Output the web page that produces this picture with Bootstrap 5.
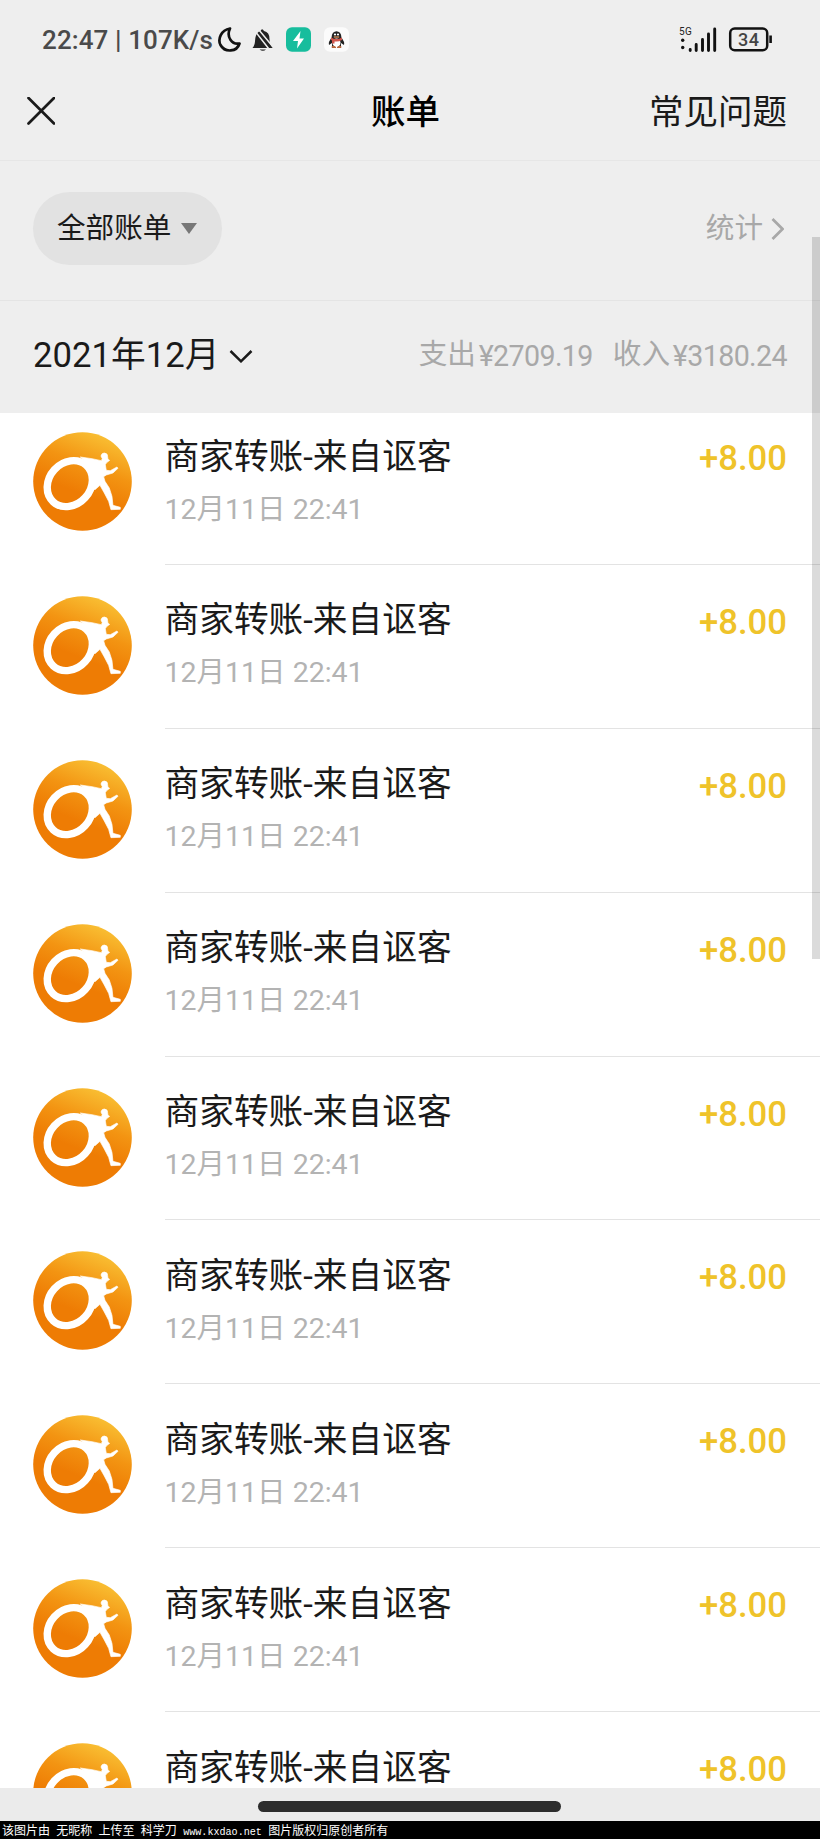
<!DOCTYPE html>
<html lang="zh-CN">
<head>
<meta charset="utf-8">
<meta name="viewport" content="width=device-width, initial-scale=1">
<title>账单</title>
<link href="https://cdn.jsdelivr.net/npm/bootstrap@5.3.0/dist/css/bootstrap.min.css" rel="stylesheet">
<style>
  body { font-family: Roboto, "Noto Sans CJK SC", sans-serif; background: #fff; color: #1a1a1a; }
  .screen { width: 820px; height: 1839px; line-height: 1; }
  .chrome { background: #eee; }
  .status { height: 80px; padding: 0 48px 0 42px; }
  .status-text { font-size: 26px; font-weight: 500; color: #4a4a4a; width: 175px; letter-spacing: .1px; }
  .titlebar { height: 81px; padding: 0 33px 18px 27px; border-bottom: 1px solid #e6e6e6; }
  .titlebar h1 { font-size: 34.5px; font-weight: 500; color: #000; line-height: 1; padding: 2px 9px 0 0; }
  .faq { font-size: 34.5px; padding-top: 3px; }
  .filter { height: 140px; padding: 31px 33px 0; border-bottom: 1px solid #e4e4e4; }
  .pill { height: 73px; width: 189px; background: #e2e2e2; font-size: 28.6px; padding: 0 25px 0 24px; }
  .stats { height: 73px; color: #a8a8a8; font-size: 28.6px; padding-right: 3px; }
  .month { height: 112px; padding: 0 33px 4px; }
  .month-name { font-size: 34.7px; }
  .sums { font-size: 28.6px; color: #a8a8a8; }
  .sum-label { width: 60px; }
  .sum-num { font-size: 28.6px; padding-top: 2px; letter-spacing: -.6px; }
  .bills { height: 1375px; }
  .bill { height: 163.9px; padding-left: 32.5px; }
  .bill:first-of-type { margin-top: -12px; }
  .bill-body { margin-left: 33px; padding: 38.5px 33px 0 0; border-bottom: 1px solid #e3e3e3; }
  .bill-name { font-size: 34.7px; height: 36px; white-space: nowrap; }
  .bill-time { font-size: 28.5px; color: #b3b3b3; margin-top: 20px; }
  .amount { font-size: 34.7px; font-weight: 500; color: #efc32a; padding-top: 1.5px; }
  .avatar { width: 99px; height: 99px; margin-top: 31px; flex: none; }
  .homebar { height: 33px; background: #ebebeb; padding: 13px 0 0 258px; }
  .homebar div { width: 303px; height: 11px; background: #2d2d2d; }
  .credit { height: 18px; background: #000; color: #fff; font: 12px/18px "Noto Sans CJK SC", sans-serif; padding-left: 2px; word-spacing: 3.6px; white-space: nowrap; }
  .credit span { font: 10.1px/12px "Liberation Mono", monospace; }
  .scrollthumb { position: absolute; right: 0; top: 237px; width: 8px; height: 722px; background: rgba(0,0,0,.14); }
</style>
</head>
<body>
<svg width="0" height="0" class="position-absolute" aria-hidden="true">
  <defs>
    <linearGradient id="orange" x1=".66" y1="0" x2=".42" y2=".6">
      <stop offset="0" stop-color="#f9c034"/><stop offset=".55" stop-color="#f39412"/><stop offset="1" stop-color="#ee7c04"/>
    </linearGradient>
    <symbol id="runner" viewBox="0 0 99 99">
      <circle cx="49.5" cy="49.5" r="49.3" fill="url(#orange)"/>
      <ellipse cx="36.8" cy="51.6" rx="24.6" ry="20.8" fill="none" stroke="#fff" stroke-width="7.4" transform="rotate(-48 36.8 51.6)"/>
      <path fill="#fff" stroke="#fff" stroke-width="2" stroke-linejoin="round" transform="translate(-2.7 -4) scale(.3333)" d="M150 87L185 92L213 98L216 92L212 84Q214 75 222 75Q233 76 232 86L233 94L238 97L228 105L225 110L228 127L240 128L260 117L263 121L248 135L228 141L220 146L224 160L237 180L245 205L248 232L270 238V244L242 245L235 220L222 195L209 172L194 185L182 180L192 150L185 120Z"/>
    </symbol>
  </defs>
</svg>
<main class="screen position-relative overflow-hidden d-flex flex-column">
  <div class="chrome status d-flex align-items-center flex-shrink-0">
    <div class="status-text text-nowrap">22:47 | 107K/s</div>
    <svg width="134" height="30" viewBox="0 0 134 30">
      <path d="M13 3.500C4 5 .5 14 3.500 20C8 28 20 27 22.500 18.500C15 20 9 12 13 3.500Z" fill="none" stroke="#111" stroke-width="2.700" stroke-linejoin="round"/>
      <path d="M35.500 23C39 19 37.500 14 39 10.500Q40.500 6.500 43.500 6Q45 2.500 47 6Q52.500 7 52.500 14Q52.500 20 56 23ZM42.500 24.500H49Q46 27 42.500 24.500Z" fill="#222"/>
      <path d="M37.500 5.500L53.500 26M42 5L56.500 22.500" stroke="#eee" stroke-width="1.500"/>
      <rect x="69" y="2.300" width="25" height="24.500" rx="6" fill="#17bd9d"/>
      <path d="M83.500 6L76 16H81L80 23.500L87 13.500H82.500Z" fill="#fff"/>
      <rect x="107" y="2.300" width="25" height="24.500" rx="6" fill="#fbfbfb"/>
      <ellipse cx="119.500" cy="11.500" rx="4.800" ry="5.300" fill="#222"/>
      <path d="M115 12Q111 17 112 20L115 18V21H124V18L127 20Q128 17 124 12Z" fill="#222"/>
      <ellipse cx="119.500" cy="17.800" rx="4" ry="4.300" fill="#fff"/>
      <path d="M115 21.500Q117 20.500 119 22.500H115ZM120 22.500Q122 20.500 124 21.500V22.500Z" fill="#b5653c" stroke="#b5653c"/>
      <path d="M114 12.500Q119.500 15.500 125 12.500V15Q119.500 18 114 15ZM115 15H117.500V18.500H115Z" fill="#d0564c"/>
      <g fill="#fff"><circle cx="118" cy="9.500" r="1.100"/><circle cx="121" cy="9.500" r="1.100"/></g>
      <path d="M116.800 12H122.200" stroke="#d9935c" stroke-width="1.300"/>
    </svg>
    <svg class="ms-auto" width="94" height="30" viewBox="0 0 94 30">
      <text x="1" y="9.800" font-size="10" letter-spacing=".4" fill="#222">5G</text>
      <g fill="#111"><circle cx="4.700" cy="15.300" r="1.700"/><circle cx="4.700" cy="22.500" r="1.700"/></g>
      <path d="M12.200 24.500V25.500M18.200 19.500V25.500M24.500 14.500V25.500M30.500 9V25.500M36.700 4V25.500" stroke="#111" stroke-width="2.900" stroke-linecap="round"/>
      <rect x="52.200" y="3.500" width="37" height="21.700" rx="4.500" fill="none" stroke="#111" stroke-width="2.500"/>
      <path d="M92.600 10.500V18" stroke="#111" stroke-width="2.600"/>
      <text x="60" y="20.700" font-size="18" font-weight="500" letter-spacing=".4" fill="#444">34</text>
    </svg>
  </div>
  <header class="chrome titlebar d-flex align-items-center justify-content-between flex-shrink-0">
    <svg width="28" height="28" viewBox="0 0 28 28"><path d="M1.500 1L27 26.500M27 1L1.500 26.500" stroke="#1a1a1a" stroke-width="2.700" stroke-linecap="round"/></svg>
    <h1 class="position-absolute start-50 translate-middle-x mb-0 text-nowrap">账单</h1>
    <div class="faq">常见问题</div>
  </header>
  <div class="chrome filter d-flex justify-content-between flex-shrink-0">
    <div class="pill rounded-pill d-flex align-items-center justify-content-between text-nowrap">全部账单<svg width="16" height="11" viewBox="0 0 16 11"><path d="M0 0H16L8 11Z" fill="#777"/></svg></div>
    <div class="stats d-flex align-items-center gap-2">统计<svg width="13" height="22" viewBox="0 0 13 22"><path d="M1.500 1L11.500 11L1.500 21" fill="none" stroke="#a8a8a8" stroke-width="2.700"/></svg></div>
  </div>
  <div class="chrome month d-flex align-items-center justify-content-between flex-shrink-0">
    <div class="month-name text-nowrap d-flex align-items-center">2021年12月<svg class="ms-2 mt-1" width="27" height="13" viewBox="0 0 27 13"><path d="M3.500 1L14 11.300L24.500 1" fill="none" stroke="#1a1a1a" stroke-width="2.500"/></svg></div>
    <div class="sums d-flex text-nowrap"><span class="sum-label">支出</span><span class="sum-num me-3 pe-1">¥2709.19</span><span class="sum-label">收入</span><span class="sum-num">¥3180.24</span></div>
  </div>
  <section id="bills" class="bills bg-white overflow-hidden flex-shrink-0">
    <template>
      <article class="bill d-flex">
        <svg class="avatar"><use href="#runner"/></svg>
        <div class="bill-body flex-grow-1 d-flex justify-content-between">
          <div><div class="bill-name">商家转账-来自讴客</div><div class="bill-time">12月11日 22:41</div></div>
          <div class="amount">+8.00</div>
        </div>
      </article>
    </template>
  </section>
  <div class="homebar flex-shrink-0"><div class="rounded-pill"></div></div>
  <footer class="credit flex-shrink-0">该图片由 无昵称 上传至 科学刀 <span>www.kxdao.net</span> 图片版权归原创者所有</footer>
  <div class="scrollthumb"></div>
</main>
<script src="https://cdn.jsdelivr.net/npm/bootstrap@5.3.0/dist/js/bootstrap.bundle.min.js"></script>
<script>
  const list = document.getElementById('bills');
  const row = list.querySelector('template');
  for (let i = 0; i < 9; i++) list.append(row.content.cloneNode(true));
  // the last row is only half in view: its time line lies below the fold
  list.lastElementChild.querySelector('.bill-time').remove();
</script>
</body>
</html>
